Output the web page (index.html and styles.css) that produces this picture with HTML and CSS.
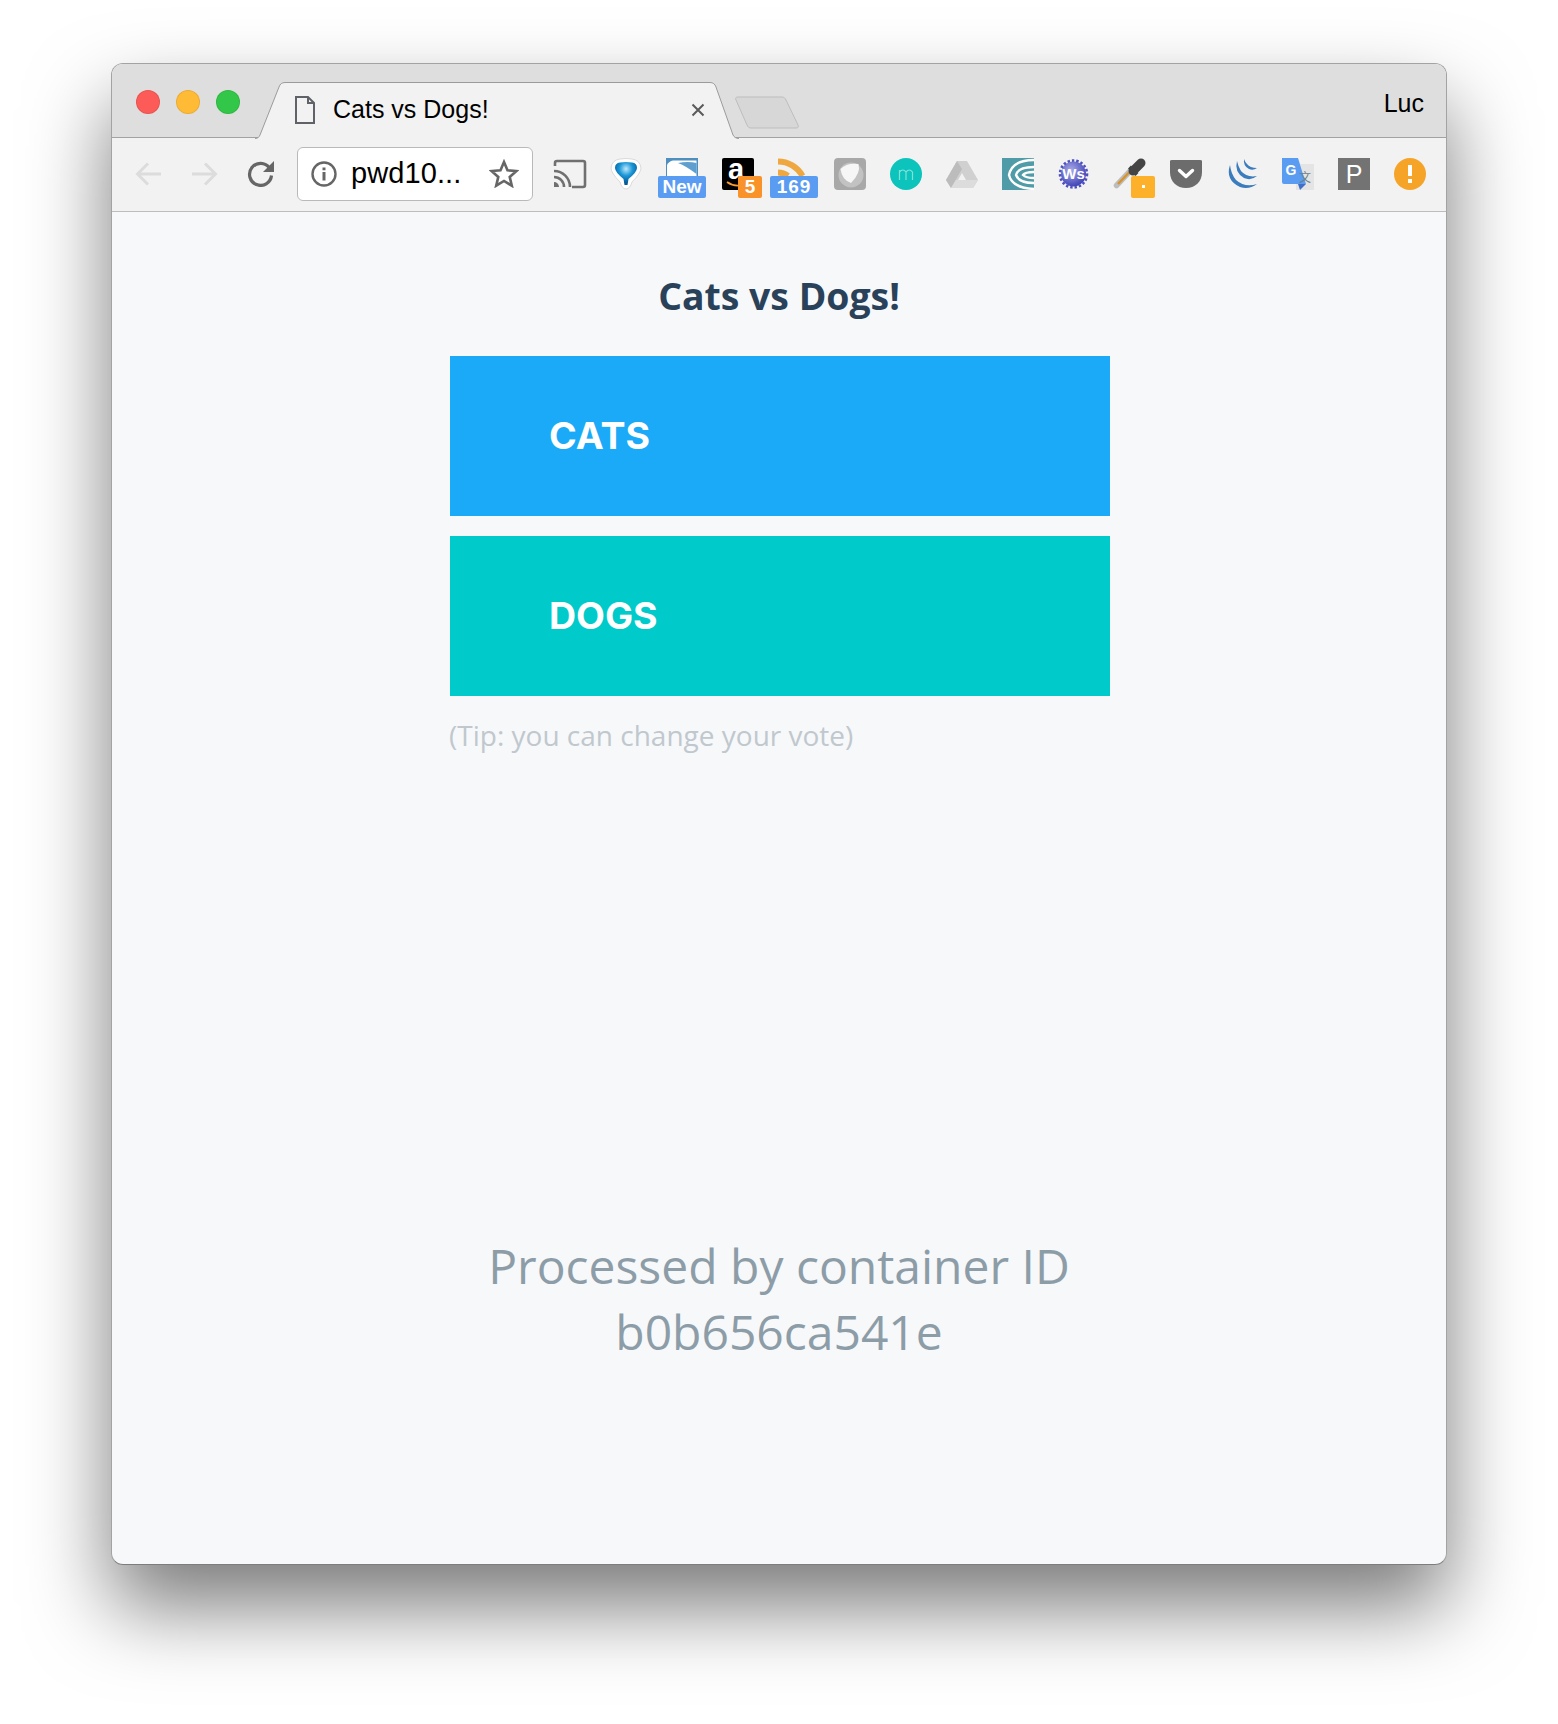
FILE: index.html
```html
<!DOCTYPE html>
<html lang="en">
<head>
    <meta charset="UTF-8">
    <meta name="viewport" content="width=device-width, initial-scale=1.0">
    <title>Cats vs Dogs!</title>
    <link rel="stylesheet" href="styles.css">
</head>
<body>
    <div class="window">
        <!-- Tab strip -->
        <div class="tabbar">
            <div class="lights">
                <span class="light red"></span>
                <span class="light yellow"></span>
                <span class="light green"></span>
            </div>
            <div class="tab">
                <svg class="tab-shape" width="484" height="57" viewBox="0 0 484 57">
                    <path d="M0 56.5 C3 56.5 4 55 5 53 L24 5 C25 2 27 .5 30 .5 H455 C458 .5 460 2 461 5 L478 53 C479 55 481 56.5 484 56.5" fill="#f2f2f2" stroke="#9b9b9b"/>
                </svg>
                <svg class="doc-icon" width="20" height="28" viewBox="0 0 20 28">
                    <path d="M1 1 H13 L19 7 V27 H1 Z M13 1 V7 H19" fill="none" stroke="#5f6368" stroke-width="2"/>
                </svg>
                <span class="tab-title">Cats vs Dogs!</span>
                <svg class="tab-close" width="14" height="14" viewBox="0 0 14 14">
                    <path d="M1.5 1.5 L12.5 12.5 M12.5 1.5 L1.5 12.5" stroke="#5a5a5a" stroke-width="2"/>
                </svg>
            </div>
            <svg class="new-tab" width="66" height="33" viewBox="0 0 66 33">
                <path d="M4 1 H48 C50 1 51 2 52 4 L64 29 C65 31 64 32 62 32 H17 C15 32 14 31 13 29 L2 4 C1 2 2 1 4 1 Z" fill="#d7d7d7" stroke="#bdbdbd"/>
            </svg>
            <span class="profile">Luc</span>
        </div>

        <!-- Toolbar -->
        <div class="toolbar">
            <div class="nav">
                <svg width="27" height="26" viewBox="0 0 27 26"><path d="M26 13 H3 M13 2.500 L2.500 13 L13 23.500" fill="none" stroke="#dcdcdc" stroke-width="3"/></svg>
                <svg width="27" height="26" viewBox="0 0 27 26"><path d="M1 13 H24 M14 2.500 L24.500 13 L14 23.500" fill="none" stroke="#dcdcdc" stroke-width="3"/></svg>
                <svg width="27" height="27" viewBox="0 0 27 27"><path d="M22.500 8 A11 11 0 1 0 24.500 15.500" fill="none" stroke="#666" stroke-width="3.200"/><path d="M27 1 V12 H16 Z" fill="#666"/></svg>
            </div>
            <div class="omnibox">
                <svg width="26" height="26" viewBox="0 0 26 26"><circle cx="13" cy="13" r="11.500" fill="none" stroke="#666" stroke-width="2.400"/><path d="M11.500 11 H14.500 V19.500 H11.500 Z M11.500 6.500 H14.500 V9.300 H11.500 Z" fill="#666"/></svg>
                <span class="url">pwd10...</span>
                <svg class="star" width="30" height="29" viewBox="0 0 30 29"><path d="M15 3 L18.500 11.300 L27.500 12 L20.700 17.900 L22.800 26.700 L15 22 L7.200 26.700 L9.300 17.900 L2.500 12 L11.500 11.300 Z" fill="none" stroke="#666" stroke-width="2.600" stroke-linejoin="miter"/></svg>
            </div>
            <div class="extensions">
                <div class="ext">
                    <svg width="32" height="32" viewBox="0 0 32 32"><path d="M1 8 V5 Q1 3 3 3 H29 Q31 3 31 5 V27 Q31 29 29 29 H18" fill="none" stroke="#707070" stroke-width="2.600"/><path d="M0 13 A16 16 0 0 1 16 29 M0 19 A10 10 0 0 1 10 29" fill="none" stroke="#707070" stroke-width="2.600"/><path d="M0 24 A5 5 0 0 1 5 29 H0 Z" fill="#707070"/></svg>
                </div>
                <div class="ext">
                    <svg width="32" height="32" viewBox="0 0 32 32">
                        <defs>
                            <radialGradient id="gem" cx="0.5" cy="0.3" r="0.6">
                                <stop offset="0" stop-color="#bfe9fb"/>
                                <stop offset="0.5" stop-color="#1b97d8"/>
                                <stop offset="1" stop-color="#055a95"/>
                            </radialGradient>
                        </defs>
                        <path d="M1 10 Q2 2 10 1 Q16 0 22 1 Q30 2 31 10 Q31 15 22 24 Q20 31 16 31 Q12 31 10 24 Q1 15 1 10 Z" fill="#fff" stroke="#dadada"/>
                        <path d="M5 10 Q5 5 10 4.500 Q16 3.500 22 4.500 Q27 5 27 10 Q27 14 18.500 21 L17.500 27 H14.500 L13.500 21 Q5 14 5 10 Z" fill="url(#gem)"/>
                    </svg>
                </div>
                <div class="ext">
                    <svg width="32" height="32" viewBox="0 0 32 32"><rect width="32" height="18" fill="#4f8fc0"/><path d="M7 2.500 H30.500 V18 H1 V7 Q3 3 7 2.500 Z" fill="#fff"/><path d="M12 5 Q22 3 30.500 5 V16 Q20 8 12 5 Z" fill="#5f9fcf"/></svg>
                    <span class="badge blue">New</span>
                </div>
                <div class="ext">
                    <svg width="32" height="32" viewBox="0 0 32 32"><rect width="32" height="32" rx="2" fill="#000"/><text x="14" y="21" class="amazon-a">a</text><path d="M5 24 Q12 29 20 27" fill="none" stroke="#f79c34" stroke-width="1.800"/></svg>
                    <span class="badge orange narrow">5</span>
                </div>
                <div class="ext">
                    <svg width="32" height="32" viewBox="0 0 32 32"><path d="M0 3.500 A28 28 0 0 1 24.500 18 M0 14.500 A17 17 0 0 1 10 18" fill="none" stroke="#eea83f" stroke-width="6"/></svg>
                    <span class="badge blue wide">169</span>
                </div>
                <div class="ext">
                    <svg width="32" height="32" viewBox="0 0 32 32"><rect width="32" height="32" rx="4" fill="#a8a8a8"/><circle cx="17" cy="17" r="12.500" fill="#c2c2c2"/><path d="M6.500 11 Q13 4.500 24.500 6 Q27 15 17 25 Q8 22 6.500 11 Z" fill="#f6f6f6"/></svg>
                </div>
                <div class="ext">
                    <svg width="32" height="32" viewBox="0 0 32 32"><circle cx="16" cy="16" r="16" fill="#0cc4bb"/><path d="M9.500 22 V12 M9.500 14 Q13 10 16 14 V22 M16 14 Q19.500 10 22.500 14 V22" fill="none" stroke="#7fe3dc" stroke-width="1.200"/></svg>
                </div>
                <div class="ext">
                    <svg width="32" height="32" viewBox="0 0 32 32"><path d="M11 3 H21 L32 22 L27 30 H5 L0 22 Z" fill="#d0d0d0"/><path d="M11 3 L0 22 L5 30 L16 11 Z" fill="#bcbcbc"/><path d="M5 30 H27 L32 22 H10 Z" fill="#dcdcdc"/><path d="M16 15 L20 22 H12 Z" fill="#f2f2f2"/></svg>
                </div>
                <div class="ext">
                    <svg width="32" height="32" viewBox="0 0 32 32"><rect width="32" height="32" fill="#4f9ba8"/><path d="M32 2 Q10 2 7 17 Q10 30 32 31 M32 9 Q16 9 14 17 Q17 25 32 25 M32 14 Q23 14 21 17 Q24 20 32 20" fill="none" stroke="#fff" stroke-width="2.400"/></svg>
                </div>
                <div class="ext">
                    <svg width="32" height="32" viewBox="0 0 32 32">
                        <defs>
                            <radialGradient id="seal" cx="0.4" cy="0.35" r="0.7">
                                <stop offset="0" stop-color="#a9abe8"/>
                                <stop offset="1" stop-color="#3a3db4"/>
                            </radialGradient>
                        </defs>
                        <circle cx="15.500" cy="16" r="12.500" fill="url(#seal)"/>
                        <circle cx="15.500" cy="16" r="13.500" fill="none" stroke="#4d50bf" stroke-width="2.600" stroke-dasharray="2.400 2"/>
                        <text x="15.500" y="21" class="ws">Ws</text>
                    </svg>
                </div>
                <div class="ext">
                    <svg width="32" height="32" viewBox="0 0 32 32"><path d="M2.500 27.500 L17 12" stroke="#bdbdbd" stroke-width="5.500" stroke-linecap="round"/><path d="M4 26 L15 14.500" stroke="#d8942c" stroke-width="2.500"/><path d="M15.500 9 L23 16.500" stroke="#3f3f3f" stroke-width="4"/><path d="M19 13 L27 5" stroke="#444" stroke-width="9" stroke-linecap="round"/></svg>
                    <span class="badge amber"><span class="dot"></span></span>
                </div>
                <div class="ext">
                    <svg width="32" height="32" viewBox="0 0 32 32"><path d="M0 3 Q0 2 2 2 H30 Q32 2 32 3 V14 C32 24 25 30 16 30 C7 30 0 24 0 14 Z" fill="#6c6c6c"/><path d="M9.500 12.500 L16 18.500 L22.500 12.500" fill="none" stroke="#fff" stroke-width="3.400" stroke-linecap="round" stroke-linejoin="round"/></svg>
                </div>
                <div class="ext">
                    <svg width="32" height="32" viewBox="0 0 32 32"><path d="M4 7 Q-1 22 14 29 Q23 32 31 26 Q19 30 10 22 Q5 16 4 7 Z" fill="#3a7cbd"/><path d="M11 3 Q8 14 18 20 Q25 23 31 18 Q21 20 15 13 Q12 8 11 3 Z" fill="#3a7cbd"/><path d="M18 1 Q17 8 23 11 Q27 13 31 10 Q24 10 21 6 Q19 4 18 1 Z" fill="#3a7cbd"/></svg>
                </div>
                <div class="ext">
                    <svg width="32" height="32" viewBox="0 0 32 32"><rect x="14" y="6" width="18" height="26" fill="#e4e4e4"/><path d="M0 0 H16 L24 26 H2 Q0 26 0 24 Z" fill="#5a9cf2"/><path d="M16 26 H24 L18 32 Z" fill="#3f6fc9"/><text x="9" y="17" class="gtext">G</text><text x="23" y="24" class="xtext">文</text></svg>
                </div>
                <div class="ext">
                    <svg width="32" height="32" viewBox="0 0 32 32"><rect width="32" height="32" fill="#737373"/><text x="16" y="25" class="ptext">P</text></svg>
                </div>
                <div class="ext">
                    <svg width="32" height="32" viewBox="0 0 32 32"><circle cx="16" cy="16" r="16" fill="#f5a427"/><path d="M14 7 H18 V18 H14 Z M14 21 H18 V25 H14 Z" fill="#fff"/></svg>
                </div>
            </div>
        </div>

        <!-- Page -->
        <div class="page">
            <h3 class="question">Cats vs Dogs!</h3>
            <div class="choice cats">CATS</div>
            <div class="choice dogs">DOGS</div>
            <p class="tip">(Tip: you can change your vote)</p>
            <p class="processed">Processed by container ID<br>b0b656ca541e</p>
        </div>
    </div>
</body>
</html>
```

FILE: styles.css
```css
body {
    margin: 0;
    padding: 63px 0 0 111px;
    height: 1724px;
    box-sizing: border-box;
    overflow: hidden;
    background-color: #fff;
    font-family: "Liberation Sans", Arial, sans-serif;
}

/* Window */
.window {
    width: 1336px;
    height: 1502px;
    box-sizing: border-box;
    border: 1px solid #a3a3a3;
    border-bottom-color: #7d7d7d;
    border-radius: 12px;
    overflow: hidden;
    display: flex;
    flex-direction: column;
    background-color: #f7f8fa;
    box-shadow: 0 42px 82px rgba(0, 0, 0, 0.52);
}

/* Tab strip */
.tabbar {
    height: 73px;
    flex-shrink: 0;
    display: flex;
    align-items: flex-end;
    padding-right: 22px;
    background-color: #dedede;
    border-bottom: 1px solid #a2a2a2;
}
.lights {
    display: flex;
    gap: 16px;
    margin-left: 24px;
    align-self: flex-start;
    margin-top: 26px;
}
.light {
    width: 22px;
    height: 22px;
    border-radius: 50%;
    border: 1px solid rgba(0, 0, 0, 0.08);
}
.red { background-color: #fc5b57; }
.yellow { background-color: #ffbb35; }
.green { background-color: #32c748; }

.tab {
    position: relative;
    width: 484px;
    height: 56px;
    margin-left: 15px;
    margin-bottom: -1px;
    display: flex;
    align-items: center;
    box-sizing: border-box;
    padding: 0 34px 0 40px;
}
.tab-shape {
    position: absolute;
    left: 0;
    top: 0;
}
.doc-icon, .tab-title, .tab-close {
    position: relative;
}
.tab-title {
    margin-left: 18px;
    margin-bottom: 2px;
    font-size: 25px;
    color: #000;
}
.tab-close {
    margin-left: auto;
}
.new-tab {
    margin: 0 0 8px -5px;
}
.profile {
    margin-left: auto;
    align-self: flex-start;
    margin-top: 25px;
    font-size: 25px;
    color: #000;
}

/* Toolbar */
.toolbar {
    height: 74px;
    flex-shrink: 0;
    box-sizing: border-box;
    padding-bottom: 2px;
    display: flex;
    align-items: center;
    background-color: #f2f2f2;
    border-bottom: 1px solid #bdbdbd;
}
.nav {
    display: flex;
    align-items: center;
    gap: 29px;
    margin-left: 23px;
}
.omnibox {
    width: 236px;
    height: 54px;
    box-sizing: border-box;
    margin-left: 23px;
    padding: 0 13px 0 13px;
    display: flex;
    align-items: center;
    background-color: #fff;
    border: 1px solid #b9b9b9;
    border-radius: 6px;
}
.url {
    margin-left: 14px;
    font-size: 29px;
    letter-spacing: 0.1px;
    color: #000;
}
.star {
    margin-left: auto;
}
.extensions {
    display: flex;
    gap: 24px;
    margin-left: 21px;
}
.ext {
    position: relative;
    width: 32px;
    height: 32px;
}
.ext svg {
    display: block;
    overflow: visible;
}
.badge {
    position: absolute;
    top: 18px;
    left: -8px;
    width: 48px;
    height: 22px;
    border-radius: 2px;
    display: flex;
    align-items: center;
    justify-content: center;
    font-size: 19px;
    font-weight: 700;
    color: #fff;
}
.badge.wide {
    letter-spacing: 1px;
}
.badge.blue { background-color: #5a9cf2; }
.badge.orange { background-color: #fa922a; }
.badge.amber { background-color: #fdb02a; }
.badge.narrow, .badge.amber {
    width: 24px;
    left: 16px;
}
.badge.amber {
    left: 17px;
}
.dot {
    width: 3px;
    height: 3px;
    background-color: #fff;
}
.amazon-a {
    font: 700 29px "Liberation Sans", sans-serif;
    fill: #fff;
    text-anchor: middle;
}
.ws {
    font: 700 15px "Liberation Sans", sans-serif;
    fill: #fff;
    text-anchor: middle;
}
.gtext {
    font: 700 14px "Liberation Sans", sans-serif;
    fill: #fff;
    text-anchor: middle;
}
.xtext {
    font: 12px "Noto Sans CJK SC", sans-serif;
    fill: #6b7f86;
    text-anchor: middle;
}
.ptext {
    font: 25px "Liberation Sans", sans-serif;
    fill: #fff;
    text-anchor: middle;
}

/* Page */
.page {
    flex: 1;
    display: flex;
    flex-direction: column;
    align-items: center;
    font-family: "Open Sans", sans-serif;
}
.question {
    margin: 59px 0 0;
    height: 50px;
    line-height: 50px;
    font-size: 37.4px;
    font-weight: 700;
    color: #2a4259;
}
.choice {
    width: 660px;
    height: 160px;
    box-sizing: border-box;
    margin-left: 2px;
    padding: 0 0 2px 99px;
    display: flex;
    align-items: center;
    font-family: Inter, sans-serif;
    font-size: 37.5px;
    font-weight: 700;
    color: #fff;
}
.cats {
    margin-top: 35px;
    background-color: #1aaaf8;
}
.dogs {
    margin-top: 20px;
    background-color: #00cbca;
}
.tip {
    width: 660px;
    margin: 19px 0 0;
    line-height: 40px;
    font-size: 28px;
    color: #c0c8ce;
}
.processed {
    margin: 478px 0 0;
    line-height: 66px;
    font-size: 48px;
    text-align: center;
    color: #8d9da8;
}
```
